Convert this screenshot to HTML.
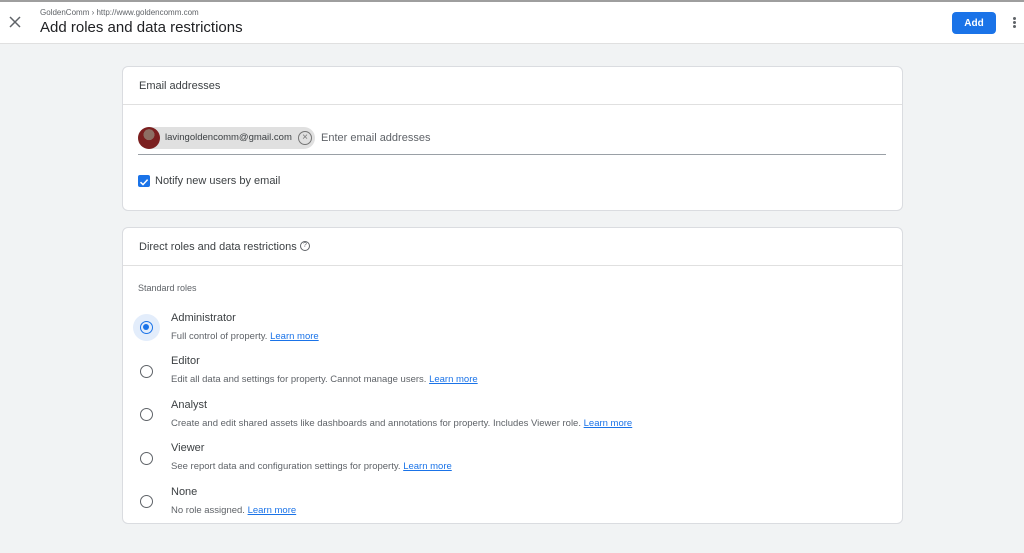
<!DOCTYPE html>
<html><head><style>
*{margin:0;padding:0;box-sizing:border-box}
body{width:1024px;height:553px;background:#f1f3f4;font-family:"Liberation Sans",Arial,sans-serif;color:#202124;position:relative;overflow:hidden}
.hdr{position:absolute;left:0;top:0;width:1024px;height:44px;background:#fff;border-top:2px solid #9e9e9e;border-bottom:1px solid #e0e0e0}
.card{position:absolute;left:122px;width:781px;background:#fff;border:1px solid #dadce0;border-radius:6px}
.ch{height:38px;border-bottom:1px solid #e0e0e0;padding-left:16px;font-size:11px;line-height:38px;color:#3c4043}
.abs{position:absolute}
.radio{position:absolute;left:140px;width:13px;height:13px;border:1.5px solid #5f6368;border-radius:50%}
.rt{position:absolute;left:171px;font-size:11px;color:#3c4043}
.rd{position:absolute;left:171px;font-size:9.5px;color:#5f6368}
.rd a{color:#1a73e8;text-decoration:underline}
</style></head><body>
<div class="hdr">
 <svg class="abs" style="left:9px;top:14px" width="12" height="12" viewBox="0 0 12 12"><path d="M1 1L11 11M11 1L1 11" stroke="#5f6368" stroke-width="1.5"/></svg>
 <div class="abs" style="left:40px;top:6px;font-size:8px;color:#5f6368">GoldenComm › http://www.goldencomm.com</div>
 <div class="abs" style="left:40px;top:17px;font-size:15px;color:#202124">Add roles and data restrictions</div>
 <div class="abs" style="left:952px;top:10px;width:44px;height:22px;background:#1a73e8;border-radius:4px;color:#fff;font-size:10px;font-weight:bold;text-align:center;line-height:23px">Add</div>
 <div class="abs" style="left:1013px;top:15px;width:3px;height:3px;background:#5f6368;border-radius:50%;box-shadow:0 4px 0 #5f6368,0 8px 0 #5f6368"></div>
</div>
<div class="card" style="top:66px;height:145px">
 <div class="ch">Email addresses</div>
</div>
<div class="abs" style="left:138px;top:127px;width:177px;height:22px;background:#e0e0e0;border-radius:11px"></div>
<div class="abs" style="left:138px;top:127px;width:22px;height:22px;border-radius:50%;background:radial-gradient(circle at 50% 35%,#8d6e63 0 30%,#7b1f1f 31% 100%)"></div>
<div class="abs" style="left:165px;top:132px;font-size:9.5px;color:#3c4043">lavingoldencomm@gmail.com</div>
<div class="abs" style="left:298px;top:131px;width:14px;height:14px;border:1.3px solid #757575;border-radius:50%;font-size:10px;line-height:11px;text-align:center;color:#757575">×</div>
<div class="abs" style="left:321px;top:132px;font-size:11px;color:#5f6368">Enter email addresses</div>
<div class="abs" style="left:138px;top:154px;width:748px;height:1px;background:#9aa0a6"></div>
<div class="abs" style="left:138px;top:175px;width:12px;height:12px;background:#1a73e8;border-radius:2px"><svg width="12" height="12" viewBox="0 0 12 12"><path d="M2.5 6.2L5 8.6L9.6 3.6" stroke="#fff" stroke-width="1.5" fill="none"/></svg></div>
<div class="abs" style="left:155px;top:175px;font-size:11px;color:#3c4043">Notify new users by email</div>
<div class="card" style="top:227px;height:297px">
 <div class="ch">Direct roles and data restrictions</div>
</div>
<div class="abs" style="left:300px;top:241px;width:10px;height:10px;border:1px solid #5f6368;border-radius:50%;font-size:7px;line-height:8px;text-align:center;color:#5f6368">?</div>
<div class="abs" style="left:138px;top:283px;font-size:9px;color:#5f6368">Standard roles</div>
<div class="abs" style="left:133px;top:314px;width:27px;height:27px;border-radius:50%;background:#e3edfb"></div>
<div class="radio" style="top:321px;border-color:#1a73e8"><div style="margin:2px;width:6px;height:6px;border-radius:50%;background:#1a73e8"></div></div>
<div class="rt" style="top:312px">Administrator</div><div class="rd" style="top:331px">Full control of property. <a>Learn more</a></div>
<div class="radio" style="top:365px"></div>
<div class="rt" style="top:355px">Editor</div><div class="rd" style="top:374px">Edit all data and settings for property. Cannot manage users. <a>Learn more</a></div>
<div class="radio" style="top:408px"></div>
<div class="rt" style="top:399px">Analyst</div><div class="rd" style="top:418px">Create and edit shared assets like dashboards and annotations for property. Includes Viewer role. <a>Learn more</a></div>
<div class="radio" style="top:452px"></div>
<div class="rt" style="top:442px">Viewer</div><div class="rd" style="top:461px">See report data and configuration settings for property. <a>Learn more</a></div>
<div class="radio" style="top:495px"></div>
<div class="rt" style="top:486px">None</div><div class="rd" style="top:505px">No role assigned. <a>Learn more</a></div>
</body></html>
